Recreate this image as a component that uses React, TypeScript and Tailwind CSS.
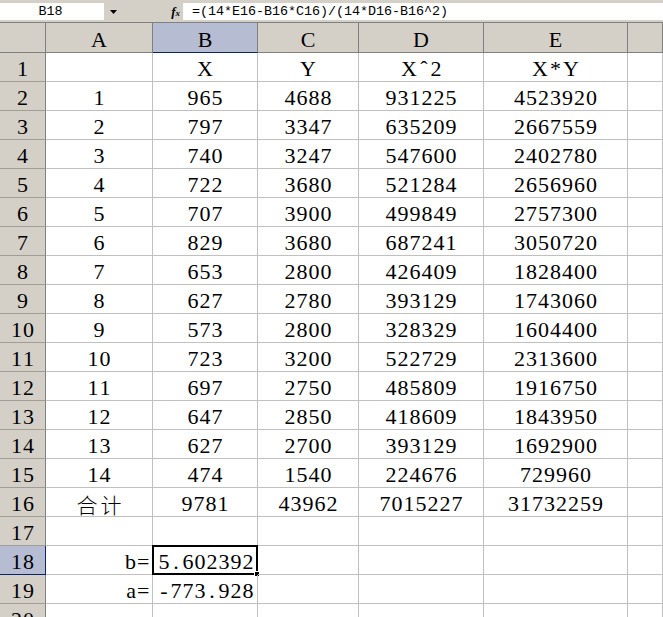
import React from "react";

const colWidths = "grid-cols-[46px_107px_105px_101px_125px_144px_1fr]";
const letters = ["A", "B", "C", "D", "E", ""];

const data: string[][] = [
  ["", "X", "Y", "X\u02c62", "X*Y"],
  ["1", "965", "4688", "931225", "4523920"],
  ["2", "797", "3347", "635209", "2667559"],
  ["3", "740", "3247", "547600", "2402780"],
  ["4", "722", "3680", "521284", "2656960"],
  ["5", "707", "3900", "499849", "2757300"],
  ["6", "829", "3680", "687241", "3050720"],
  ["7", "653", "2800", "426409", "1828400"],
  ["8", "627", "2780", "393129", "1743060"],
  ["9", "573", "2800", "328329", "1604400"],
  ["10", "723", "3200", "522729", "2313600"],
  ["11", "697", "2750", "485809", "1916750"],
  ["12", "647", "2850", "418609", "1843950"],
  ["13", "627", "2700", "393129", "1692900"],
  ["14", "474", "1540", "224676", "729960"],
  ["合计", "9781", "43962", "7015227", "31732259"],
  ["", "", "", "", ""],
  ["b=", "5.602392", "", "", ""],
  ["a=", "-773.928", "", "", ""],
  ["", "", "", "", ""],
];

// digits sit in 12px boxes, CJK in 24px boxes (SimSun-like pitch)
const Txt = ({ s }: { s: string }) => (
  <span className="inline-flex leading-none">
    {[...s].map((c, i) => {
      if (/[\u4e00-\u9fff]/.test(c))
        return (
          <span
            key={i}
            className="w-[24px] text-center font-['Noto_Sans_CJK_SC',sans-serif] font-light text-[21px]"
          >
            {c}
          </span>
        );
      if (/[A-Za-z*]/.test(c))
        return (
          <span key={i} className="px-px text-center">
            {c}
          </span>
        );
      return (
        <span key={i} className="w-[12px] text-center">
          {c}
        </span>
      );
    })}
  </span>
);

const Mono = ({ s }: { s: string }) => (
  <span className="inline-flex leading-none">
    {[...s].map((c, i) => (
      <span key={i} className="w-[8px] text-center">
        {c}
      </span>
    ))}
  </span>
);

export default function App() {
  return (
    <div className="w-[663px] h-[617px] overflow-hidden bg-white text-black font-['Liberation_Serif',serif] text-[22px]">
      {/* formula bar */}
      <div className="flex h-[22px] bg-[#d4d0c8] pt-[3px] pb-[2px]">
        <div className="w-[104px] bg-white flex items-center justify-center pr-[3px] font-['Liberation_Mono',monospace] text-[13.4px]">
          <Mono s="B18" />
        </div>
        <div className="w-[79px] flex items-center">
          <svg width="7" height="4" viewBox="0 0 7 4" className="ml-[6px]">
            <path d="M0 0h7L3.5 4z" fill="#000" />
          </svg>
          <span className="ml-auto mr-[3px] italic font-bold font-['Liberation_Serif',serif] text-[13px] leading-none">
            f<span className="text-[9px]">x</span>
          </span>
        </div>
        <div className="flex-1 bg-white flex items-center pl-[9px] font-['Liberation_Mono',monospace] text-[13.4px]">
          <Mono s="=(14*E16-B16*C16)/(14*D16-B16^2)" />
        </div>
      </div>
      <div className="h-px bg-[#808080]" />

      {/* sheet */}
      <div className={`grid ${colWidths}`}>
        <div className="h-[30px] bg-[#d4d0c8] border-r border-b border-[#808080]" />
        {letters.map((l, i) => (
          <div
            key={i}
            className={`h-[30px] flex items-end justify-center pb-px border-r border-b ${
              l === "B"
                ? "bg-[#b6bdd2] border-r-[#808080] border-b-[#0a246a]"
                : "bg-[#d4d0c8] border-[#808080]"
            }`}
          >
            <Txt s={l} />
          </div>
        ))}

        {data.map((row, r) => {
          const n = r + 1;
          const sel = n === 18;
          return (
            <React.Fragment key={n}>
              <div
                className={`h-[29px] flex items-end justify-center pb-px border-r border-b ${
                  sel
                    ? "bg-[#b6bdd2] border-[#0a246a]"
                    : "bg-[#d4d0c8] border-r-[#808080] border-b-[#a09d96]"
                }`}
              >
                <Txt s={String(n)} />
              </div>
              {[...row, ""].map((c, ci) => {
                const right = ci <= 1 && n >= 18;
                return (
                  <div
                    key={ci}
                    className={`relative h-[29px] flex items-end pb-px border-r border-b border-[#c0c0c0] ${
                      right ? "justify-end pr-[3px]" : "justify-center"
                    }`}
                  >
                    {c && <Txt s={c} />}
                    {sel && ci === 1 && (
                      <>
                        <div className="absolute -left-px -top-px -right-px -bottom-px border-2 border-black" />
                        <div className="absolute -right-[3px] -bottom-[3px] w-[6px] h-[6px] bg-black border border-white" />
                      </>
                    )}
                  </div>
                );
              })}
            </React.Fragment>
          );
        })}
      </div>
    </div>
  );
}
